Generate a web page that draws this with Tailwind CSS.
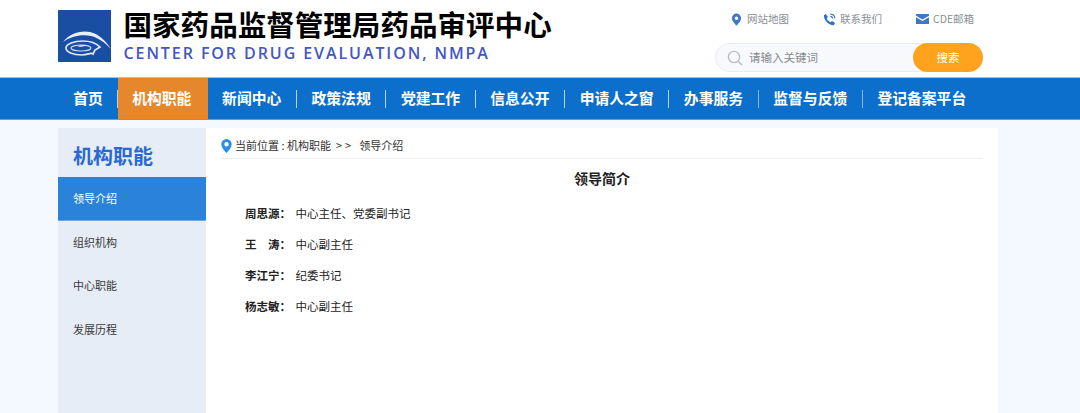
<!DOCTYPE html>
<html lang="zh">
<head>
<meta charset="utf-8">
<script src="https://cdn.jsdelivr.net/npm/@tailwindcss/browser@4"></script>
</head>
<body class="h-[413px] w-[1080px] overflow-hidden bg-[#f4f8ff] font-['Noto_Sans_CJK_SC','Noto_Sans',sans-serif]">
<header class="flex h-[77px] bg-white pl-[58px]">
  <div class="mt-[10px] h-[52px] w-[53px] bg-[#1a4ea3]">
    <svg viewBox="0 0 53 52" class="h-full w-full" fill="none">
      <path d="M5 32C11 24 22 20 32 22C41 24 47 30 53 39C46 32 41 28 33 26C24 24 13 26 5 32Z" fill="#e8eef8"/>
      <path d="M8 38C8 34 16 31 25 31C33 31 38 33 42 37L37 40L35 44C33 42 30 45 24 45C15 45 8 42 8 38Z" stroke="#dfe7f5" stroke-width="1.7"/>
      <ellipse cx="23" cy="38" rx="10" ry="3" stroke="#cfdaee" stroke-width="1.1"/>
      <path d="M19 36.5C22 35 26 35 29 35.6C26 36.6 23 36.8 19 36.5Z" fill="#fff"/>
    </svg>
  </div>
  <div class="ml-[12.5px]">
    <div class="mt-[6px] h-[36px] text-[28.55px] leading-[36px] font-bold whitespace-nowrap text-black">国家药品监督管理局药品审评中心</div>
    <div class="mt-[1px] font-['Open_Sans',sans-serif] text-[16px] leading-[20px] font-semibold tracking-[1.92px] whitespace-nowrap text-[#4356c6]">CENTER FOR DRUG EVALUATION, NMPA</div>
  </div>
  <div class="ml-auto mr-[97px] flex w-[268px] flex-col">
    <div class="mt-[11px] flex h-[16px] items-center text-[10.5px] leading-[16px] text-[#8a8f96]">
      <svg viewBox="0 0 12 14" class="ml-[16px] h-[13px] w-[11px]"><path fill-rule="evenodd" d="M6 0.5A5 5 0 0 0 1 5.5C1 9 6 13.5 6 13.5S11 9 11 5.5A5 5 0 0 0 6 0.5ZM6 3.6A2 2 0 1 1 6 7.6A2 2 0 0 1 6 3.6Z" fill="#3f78c6"/></svg>
      <span class="ml-[5px]">网站地图</span>
      <svg viewBox="0 0 14 14" class="ml-[34px] h-[13px] w-[13px]"><path d="M3 1L5.3 4.2L4 5.8C4.8 7.6 6.2 9 8 9.9L9.7 8.6L13 10.8L11.6 13.2C6 13.4 0.8 8 1 2.5Z" fill="#2f6fc4"/><path d="M8 1.2A5 5 0 0 1 12.8 6M8 3.6A2.6 2.6 0 0 1 10.4 6" stroke="#2f6fc4" stroke-width="1.2" fill="none"/></svg>
      <span class="ml-[4px]">联系我们</span>
      <svg viewBox="0 0 13 10" class="ml-[34px] h-[10px] w-[13px]"><path d="M0 0H13V1.8L6.5 5.6L0 1.8Z" fill="#3f78c6"/><path d="M0 3.2L6.5 7L13 3.2V10H0Z" fill="#3f78c6"/></svg>
      <span class="ml-[4px]">CDE邮箱</span>
    </div>
    <div class="mt-[16px] flex h-[29px] items-center rounded-full border border-[#e9edf3] bg-[#f7f9fd]">
      <svg viewBox="0 0 16 16" class="ml-[11px] h-[16px] w-[16px]" fill="none" stroke="#b8bcc2"><circle cx="7" cy="7" r="5.6" stroke-width="1.3"/><path d="M11.2 11.2L15 15" stroke-width="1.5"/></svg>
      <span class="ml-[6px] text-[11.5px] text-[#85898f]">请输入关键词</span>
      <div class="mr-[-1px] ml-auto flex h-[29px] w-[70px] items-center justify-center rounded-full bg-[#ffa31f] text-[11.5px] text-white">搜索</div>
    </div>
  </div>
</header>
<nav class="flex h-[43px] items-center border-t border-b border-t-[#9fc5ea] border-b-[#5ca0e2] bg-[#0d6fcc] pl-[58px] text-[14.8px] font-bold whitespace-nowrap text-white">
  <a class="flex h-[18px] w-[60px] items-center justify-center border-r border-white/70 pl-[1px]">首页</a>
  <a class="flex h-full w-[89.5px] items-center justify-center bg-[#e6872c] pr-[2px]">机构职能</a>
  <a class="flex h-[18px] items-center border-r border-white/70 px-[14.6px]">新闻中心</a>
  <a class="flex h-[18px] items-center border-r border-white/70 px-[14.6px]">政策法规</a>
  <a class="flex h-[18px] items-center border-r border-white/70 px-[14.6px]">党建工作</a>
  <a class="flex h-[18px] items-center border-r border-white/70 px-[14.6px]">信息公开</a>
  <a class="flex h-[18px] items-center border-r border-white/70 px-[14.6px]">申请人之窗</a>
  <a class="flex h-[18px] items-center border-r border-white/50 px-[14.6px]">办事服务</a>
  <a class="flex h-[18px] items-center border-r border-white/50 px-[14.6px]">监督与反馈</a>
  <a class="flex h-[18px] items-center px-[14.6px]">登记备案平台</a>
</nav>
<div class="mt-[8px] ml-[58px] flex h-[285px] w-[940px]">
  <aside class="w-[148px] bg-[#e6edf6]">
    <div class="flex h-[49px] items-center pt-[7px] pl-[15px] text-[20px] font-bold text-[#2a6ad0]">机构职能</div>
    <ul class="text-[11px] text-[#3a3a3a]">
      <li class="flex h-[43.5px] items-center border-b border-[#6aa9ea] bg-[#2b82d9] pl-[15px] text-white">领导介绍</li>
      <li class="flex h-[43.5px] items-center pb-[1px] pl-[15px]">组织机构</li>
      <li class="flex h-[43.5px] items-center pb-[1px] pl-[15px]">中心职能</li>
      <li class="flex h-[43.5px] items-center pb-[1px] pl-[15px]">发展历程</li>
    </ul>
  </aside>
  <main class="w-[792px] bg-white px-[15px]">
    <div class="flex h-[31px] items-center border-b border-[#eceef1] pt-[5px] text-[11px] whitespace-pre text-[#333]">
      <svg viewBox="0 0 11 14" class="h-[14px] w-[11px]"><path fill-rule="evenodd" d="M5.5 0A5.2 5.2 0 0 0 0.3 5.2C0.3 9 5.5 14 5.5 14S10.7 9 10.7 5.2A5.2 5.2 0 0 0 5.5 0ZM5.5 3A2.2 2.2 0 1 1 5.5 7.4A2.2 2.2 0 0 1 5.5 3Z" fill="#2b8fe6"/></svg>
      <span class="ml-[3px]">当前位置 : 机构职能  &gt;</span><span class="ml-[3px]">&gt;</span><span class="ml-[8px]">领导介绍</span>
    </div>
    <h1 class="mt-[9px] text-center text-[14px] leading-[20px] font-bold text-[#222]">领导简介</h1>
    <dl class="mt-[10px] ml-[24px] text-[11.5px] leading-[31px] text-[#222]">
      <div class="flex"><dt class="w-[50.5px] font-bold">周思源：</dt><dd>中心主任、党委副书记</dd></div>
      <div class="flex"><dt class="w-[50.5px] font-bold whitespace-pre">王　涛：</dt><dd>中心副主任</dd></div>
      <div class="flex"><dt class="w-[50.5px] font-bold">李江宁：</dt><dd>纪委书记</dd></div>
      <div class="flex"><dt class="w-[50.5px] font-bold">杨志敏：</dt><dd>中心副主任</dd></div>
    </dl>
  </main>
</div>
</body>
</html>
